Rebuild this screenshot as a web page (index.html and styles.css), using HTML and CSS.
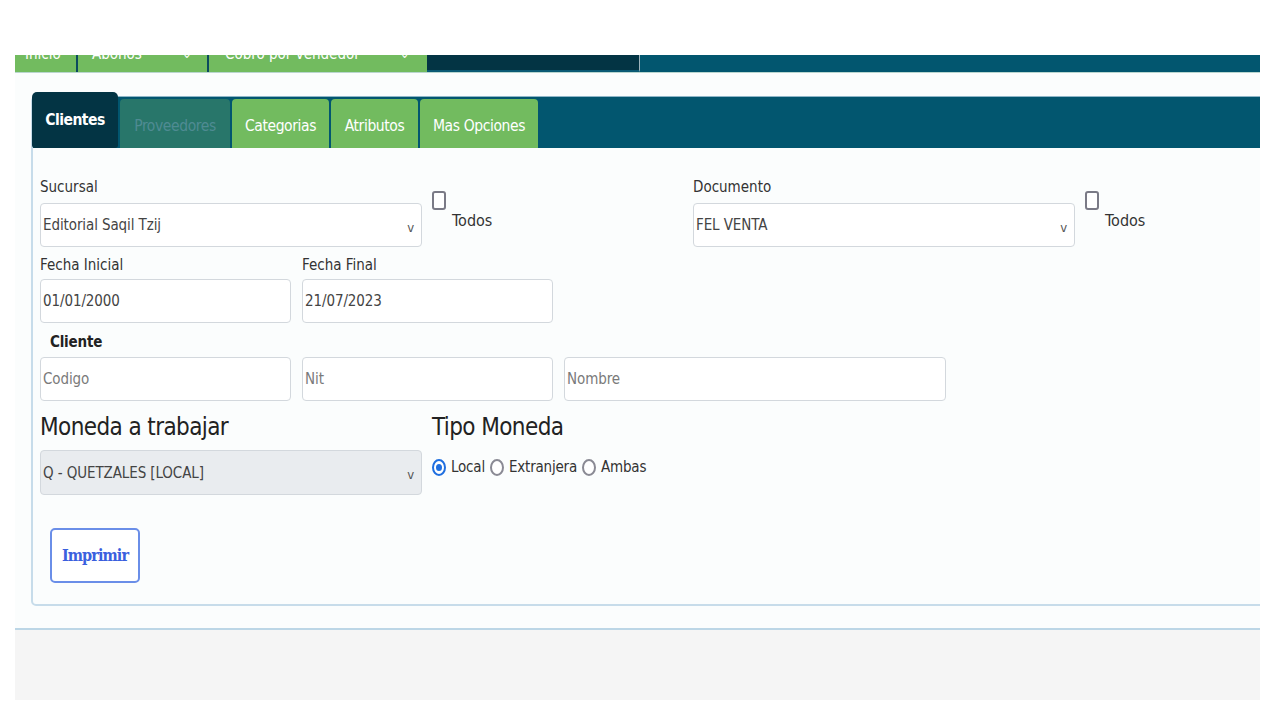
FILE: index.html
```html
<!DOCTYPE html>
<html lang="es">
<head>
<meta charset="utf-8">
<title>Reportes Clientes</title>
<link rel="stylesheet" href="styles.css">
</head>
<body>
<div class="page">
  <nav class="topnav">
    <div class="nav-item w1"><span>Inicio</span></div>
    <div class="nav-item w2"><span>Abonos</span><span class="caret">⌄</span></div>
    <div class="nav-item w3"><span>Cobro por vendedor</span><span class="caret">⌄</span></div>
    <div class="nav-dark"></div>
    <div class="nav-rest"></div>
  </nav>
  <main class="main">
    <section class="card">
      <div class="tabs">
        <div class="tab active">Clientes</div>
        <div class="tab muted">Proveedores</div>
        <div class="tab green">Categorias</div>
        <div class="tab green">Atributos</div>
        <div class="tab green">Mas Opciones</div>
      </div>
      <div class="card-body">
        <div class="row row-top">
          <div class="half">
            <div class="field wide">
              <label class="lbl">Sucursal</label>
              <div class="select"><span>Editorial Saqil Tzij</span><span class="chev">v</span></div>
            </div>
            <div class="todos"><span class="check"></span><span class="todos-txt">Todos</span></div>
          </div>
          <div class="half">
            <div class="field wide">
              <label class="lbl">Documento</label>
              <div class="select"><span>FEL VENTA</span><span class="chev">v</span></div>
            </div>
            <div class="todos"><span class="check"></span><span class="todos-txt">Todos</span></div>
          </div>
        </div>
        <div class="row row-dates">
          <div class="field narrow">
            <label class="lbl">Fecha Inicial</label>
            <div class="input">01/01/2000</div>
          </div>
          <div class="field narrow">
            <label class="lbl">Fecha Final</label>
            <div class="input">21/07/2023</div>
          </div>
        </div>
        <div class="cliente-lbl">Cliente</div>
        <div class="row row-client">
          <div class="input narrow ph">Codigo</div>
          <div class="input narrow ph">Nit</div>
          <div class="input wide ph">Nombre</div>
        </div>
        <div class="row row-moneda">
          <div class="field wide">
            <div class="big">Moneda a trabajar</div>
            <div class="select disabled"><span>Q - QUETZALES [LOCAL]</span><span class="chev">v</span></div>
          </div>
          <div class="field">
            <div class="big">Tipo Moneda</div>
            <div class="radios">
              <span class="radio on"></span><span class="rtxt">Local</span>
              <span class="radio"></span><span class="rtxt">Extranjera</span>
              <span class="radio"></span><span class="rtxt">Ambas</span>
            </div>
          </div>
        </div>
        <button class="btn">Imprimir</button>
      </div>
    </section>
  </main>
  <footer class="footer"></footer>
</div>
</body>
</html>
```
FILE: styles.css
```css
html, body { margin: 0; padding: 0; background: #ffffff; }
body { font-family: "DejaVu Sans Condensed", "DejaVu Sans", sans-serif; font-stretch: condensed; color: #333; }
.page { width: 1245px; margin-left: 15px; padding-top: 55px; overflow: hidden; }

.topnav { display: flex; height: 17px; overflow: hidden; border-bottom: 1px solid #b9d6cf; }
.nav-item { background: #72bb5f; color: #fff; font-size: 15px; display: flex; gap: 40px; padding-left: 10px; border-right: 2px solid #0b4a5e; box-sizing: border-box; white-space: nowrap; }
.nav-item span { margin-top: -12px; line-height: 22px; }
.nav-item .caret { font-size: 13px; }
.w1 { width: 63px; }
.w2 { width: 131px; padding-left: 14px; }
.w3 { width: 218px; padding-left: 16px; border-right: none; }
.nav-dark { width: 213px; background: #033444; border-bottom: 2px solid #0b5a74; border-right: 1px solid #9fb4bc; box-sizing: border-box; }
.nav-rest { flex: 1; background: #02566f; }

.main { background: #fbfdfd; padding: 23px 0 22px 16px; }
.card { border: 2px solid #c7dcea; border-radius: 5px; margin-right: -40px; background: #fbfdfd; }
.tabs { display: flex; align-items: flex-end; gap: 2px; height: 51px; background: #02566f; border-top: 1px solid #8fb6c8; margin-top: -2px; }
.tab { height: 49px; box-sizing: border-box; display: flex; align-items: center; justify-content: center; font-size: 15.5px; letter-spacing: -0.4px; color: #fff; border-radius: 4px 4px 0 0; padding-top: 4px; }
.tab.active { height: 56px; width: 86px; background: #033444; font-weight: bold; letter-spacing: -0.5px; border-radius: 5px 5px 3px 3px; padding-top: 0; margin-left: -1px; }
.tab.muted { width: 110px; background: #28766a; color: #4f8b93; }
.tab.green { background: #72bb5f; }
.tab.green:nth-child(3) { width: 97px; }
.tab.green:nth-child(4) { width: 87px; }
.tab.green:nth-child(5) { width: 118px; }

.card-body { padding: 30px 0 21px 7px; }
.row { display: flex; }
.half { width: 653px; flex-shrink: 0; display: flex; gap: 10px; }
.field { display: flex; flex-direction: column; flex-shrink: 0; }
.wide { width: 382px; flex-shrink: 0; }
.narrow { width: 251px; flex-shrink: 0; }
.lbl { font-size: 15px; line-height: 18px; color: #333; margin-bottom: 7px; }
.row-dates .lbl { margin-bottom: 5px; }
.select, .input { height: 44px; box-sizing: border-box; border: 1px solid #d3d8dd; border-radius: 4px; background: #fff; display: flex; align-items: center; justify-content: space-between; padding: 0 7px 0 2px; font-size: 15px; letter-spacing: -0.1px; color: #444; }
.select.disabled { background: #e9ecef; height: 45px; }
.chev { font-size: 13px; color: #555; margin-top: 4px; }
.todos { display: flex; align-items: flex-start; gap: 6px; padding-top: 13px; }
.check { width: 14px; height: 19px; box-sizing: border-box; border: 2px solid #7a7a86; border-radius: 3px; background: #fff; }
.todos-txt { font-size: 16px; line-height: 20px; margin-top: 20px; color: #333; }

.row-dates { gap: 11px; margin-top: 9px; }
.cliente-lbl { font-weight: bold; font-size: 15px; letter-spacing: -0.2px; line-height: 20px; margin: 9px 0 5px 10px; color: #222; }
.row-client { gap: 11px; }
.ph { color: #7a7a7a; }
.row-moneda { gap: 10px; margin-top: 9px; }
.big { font-size: 24px; letter-spacing: -0.6px; line-height: 34px; color: #222; margin-bottom: 6px; }
.radios { display: flex; align-items: center; height: 24px; margin-top: 5px; }
.radio { width: 14px; height: 17px; box-sizing: border-box; border: 2px solid #8a8a94; border-radius: 50%; background: #fff; margin-right: 5px; position: relative; }
.radio.on { border-color: #1f6fe0; }
.radio.on::after { content: ""; position: absolute; left: 2px; top: 3px; width: 6px; height: 7px; border-radius: 50%; background: #1f6fe0; }
.rtxt { font-size: 15px; letter-spacing: -0.2px; color: #333; margin-right: 5px; }

.btn { margin: 33px 0 0 10px; width: 90px; height: 55px; border: 2px solid #6a8ee8; border-radius: 5px; background: #fff; color: #3a60de; font-family: "DejaVu Serif Condensed", "DejaVu Serif", serif; font-stretch: condensed; font-weight: bold; font-size: 16px; letter-spacing: -0.9px; }

.footer { height: 70px; background: #f5f5f5; border-top: 2px solid #bcd6e6; }
```
